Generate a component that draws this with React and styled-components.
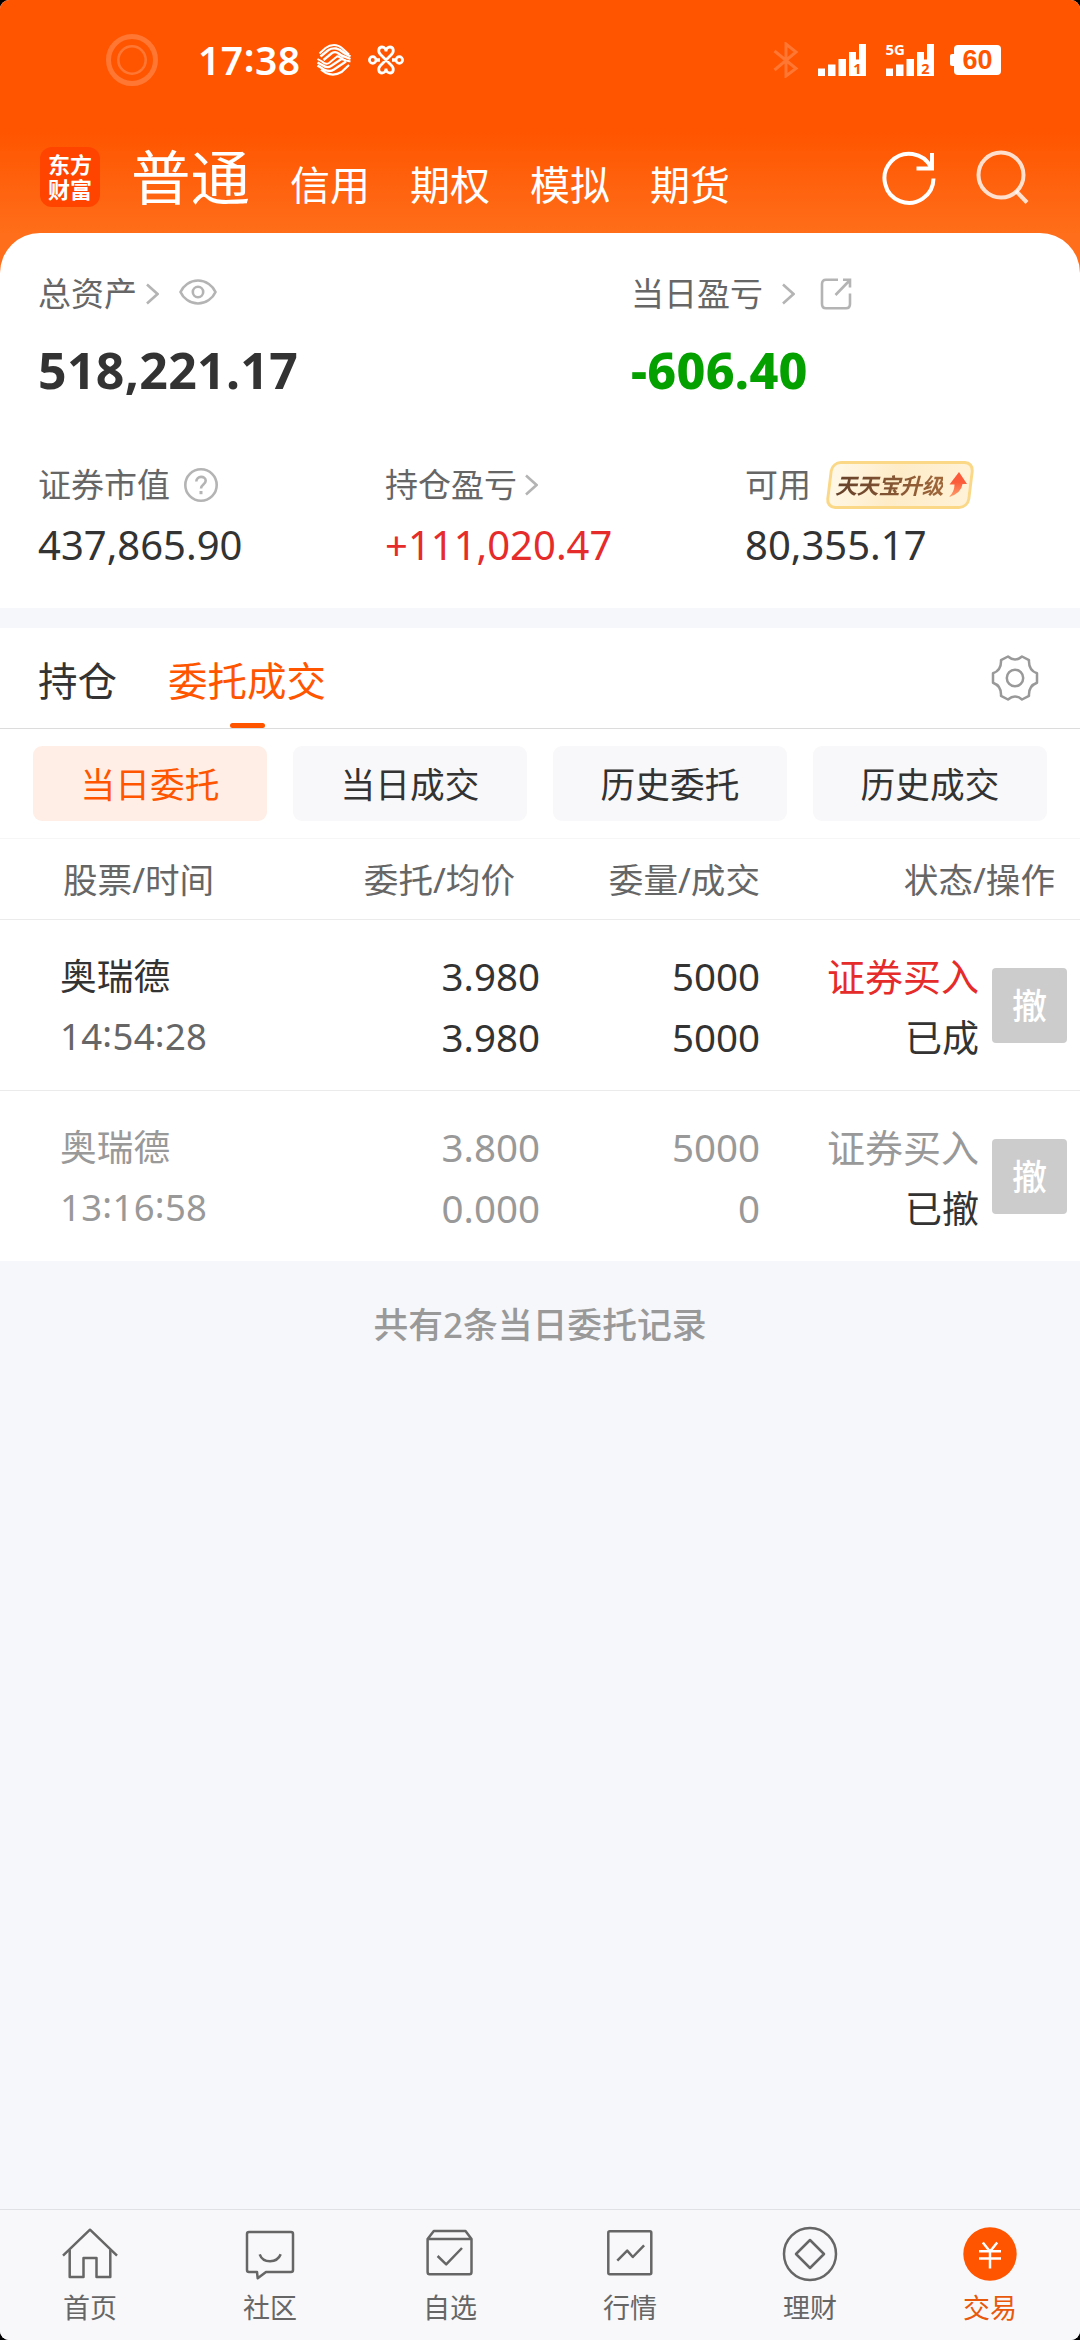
import React, { useState } from 'react';
import styled, { createGlobalStyle } from 'styled-components';

const orders = [
  { name: '奥瑞德', time: '14:54:28', price: '3.980', avg: '3.980', qty: '5000', done: '5000', side: '证券买入', status: '已成' },
  { name: '奥瑞德', time: '13:16:58', price: '3.800', avg: '0.000', qty: '5000', done: '0', side: '证券买入', status: '已撤', muted: true },
];

const accounts = ['信用', '期权', '模拟', '期货'];
const filters = ['当日委托', '当日成交', '历史委托', '历史成交'];

const navItems = [
  { label: '首页', icon: <HomeIcon /> },
  { label: '社区', icon: <CommunityIcon /> },
  { label: '自选', icon: <WatchIcon /> },
  { label: '行情', icon: <MarketIcon /> },
  { label: '理财', icon: <WealthIcon /> },
  { label: '交易', icon: <TradeIcon />, active: true },
];

function App() {
  const [filter, setFilter] = useState('当日委托');

  return (
    <Screen>
      <GlobalStyle />
      <Top>
        <StatusBar>
          <RingIcon />
          <Clock>17<Colon>:</Colon>38</Clock>
          <MobileLogo />
          <UnicomLogo />
          <StatusRight>
            <BluetoothIcon />
            <SignalIcon sim="1" />
            <SignalIcon sim="2" network="5G" />
            <Battery><span>60</span></Battery>
          </StatusRight>
        </StatusBar>
        <Header>
          <Brand>东方财富</Brand>
          <CurrentAccount>普通</CurrentAccount>
          <Accounts>
            {accounts.map((item) => (
              <a key={item}>{item}</a>
            ))}
          </Accounts>
          <RefreshIcon />
          <SearchIcon />
        </Header>
        <Assets>
          <TotalRow>
            <div>
              <Label>总资产<Chevron $left={9} /><EyeIcon /></Label>
              <Total>518,221.17</Total>
            </div>
            <div>
              <Label>当日盈亏<Chevron $left={19} /><ShareIcon /></Label>
              <Total $down>-606.40</Total>
            </div>
          </TotalRow>
          <DetailRow>
            <div>
              <DetailLabel>证券市值<HelpIcon /></DetailLabel>
              <Amount>437,865.90</Amount>
            </div>
            <div>
              <DetailLabel>持仓盈亏<Chevron $left={8} /></DetailLabel>
              <Amount $up>+111,020.47</Amount>
            </div>
            <div>
              <DetailLabel>可用<UpgradeBadge /></DetailLabel>
              <Amount>80,355.17</Amount>
            </div>
          </DetailRow>
        </Assets>
      </Top>

      <Panel>
        <Tabs>
          <Tab>持仓</Tab>
          <Tab $active>委托成交</Tab>
          <GearIcon />
        </Tabs>
        <Filters>
          {filters.map((item) => (
            <Filter key={item} $active={item === filter} onClick={() => setFilter(item)}>{item}</Filter>
          ))}
        </Filters>
        <TableHead>
          <span>股票/时间</span>
          <span>委托/均价</span>
          <span>委量/成交</span>
          <span>状态/操作</span>
        </TableHead>
        {orders.map((order) => (
          <Order key={order.time} $muted={order.muted}>
            <Stock>
              <b>{order.name}</b>
              <Time $muted={order.muted}>
                {order.time.split(':').map((part, i) => (
                  <React.Fragment key={i}>{i > 0 && <Colon>:</Colon>}{part}</React.Fragment>
                ))}
              </Time>
            </Stock>
            <Cell><span>{order.price}</span><span>{order.avg}</span></Cell>
            <Cell><span>{order.qty}</span><span>{order.done}</span></Cell>
            <Cell><Side $muted={order.muted}>{order.side}</Side><Status>{order.status}</Status></Cell>
            <CancelBtn>撤</CancelBtn>
          </Order>
        ))}
      </Panel>
      <Summary>共有2条当日委托记录</Summary>

      <BottomNav>
        {navItems.map((item) => (
          <NavItem key={item.label} $active={item.active}>
            {item.icon}
            <span>{item.label}</span>
          </NavItem>
        ))}
      </BottomNav>
    </Screen>
  );
}

export default App;

function RingIcon() {
  return (
    <svg width="52" height="52" viewBox="0 0 52 52" fill="none" stroke="#fff" strokeOpacity="0.2">
      <circle cx="26" cy="26" r="23.5" strokeWidth="5" />
      <circle cx="26" cy="26" r="13.7" strokeWidth="2.6" />
    </svg>
  );
}

function MobileLogo() {
  return (
    <CarrierSvg width="36" height="32" viewBox="0 0 36 32" $left={15}>
      <path d="M3.5 9.5L9.5 4Q13.5 1 18 1T26.5 4.5L33 10.5" strokeWidth="2" />
      <path d="M4.5 12.500L12.500 6Q15.500 4 20 4.500L24 6Q28 9.500 34.500 12.500" strokeWidth="2.400" />
      <path d="M7.500 16L16 9Q19.500 7 22.500 9.500T28 12.500L34.500 15" strokeWidth="2.400" />
      <path d="M1.500 15L6 17.500Q9.500 21 13 19L20 13.200Q22 11.500 24 13.500T30 16.500L34.500 17.500" strokeWidth="2" />
      <path d="M1.5 18.5L7 21.5Q11.500 24.500 15 22L27 14" strokeWidth="2.400" />
      <path d="M1.500 21.500L8 25.500Q14 28.500 18 25.500L30 17.500" strokeWidth="2.400" />
      <path d="M5 25.500L10 29Q18 32.500 25.500 28L33 21" strokeWidth="2.200" />
    </CarrierSvg>
  );
}

function UnicomLogo() {
  return (
    <CarrierSvg width="36" height="30" viewBox="0 0 36 30" $left={16}>
      <circle cx="4.700" cy="15" r="3.300" strokeWidth="2.700" />
      <circle cx="31.300" cy="15" r="3.300" strokeWidth="2.700" />
      <path d="M8 15H12M24 15H28" strokeWidth="3.500" />
      <path d="M12.500 20.500L23.500 9.500C26.500 6.500 25.500 2 22 2C19.500 2 18 4 18 6.500C18 4 16.500 2 14 2C10.500 2 9.500 6.500 12.500 9.500L23.500 20.500C26.500 23.500 25.500 28 22 28C19.500 28 18 26 18 23.500C18 26 16.500 28 14 28C10.500 28 9.500 23.500 12.500 20.500Z" strokeWidth="2.800" />
    </CarrierSvg>
  );
}

function BluetoothIcon() {
  return (
    <svg width="26" height="36" viewBox="0 0 26 36" fill="none" stroke="#fff" strokeOpacity="0.2" strokeWidth="3">
      <path d="M1.500 9L23 26.500L13 34V2L23 10L1.500 28" />
    </svg>
  );
}

function SignalIcon({ sim, network }) {
  return (
    <SignalSvg width="48" height="32" viewBox="0 0 48 32" fill="#fff">
      <path d="M0 24.500H7V32H0ZM10 20.500H17.500V32H10ZM20.500 15H28V32H20.500ZM31 8H38V15.500H41V0H48V32H31Z" />
      <text x="39.500" y="29.500" fontSize="14.500" fontWeight="700" textAnchor="middle" fill="#ff5500">{sim}</text>
      {network && <text x="-0.500" y="11" fontSize="15" fontWeight="700">{network}</text>}
    </SignalSvg>
  );
}

function RefreshIcon() {
  return (
    <RefreshSvg width="60" height="60" viewBox="0 0 60 60" fill="none" stroke="#fff" strokeWidth="4">
      <path d="M54.500 30.500A24.500 24.500 0 1 1 52 19.500" />
      <path d="M53 5V20.500H37.500" />
    </RefreshSvg>
  );
}

function SearchIcon() {
  return (
    <svg width="54" height="54" viewBox="0 0 54 54" fill="none" stroke="#fff" strokeOpacity="0.8" strokeWidth="4">
      <circle cx="25" cy="25" r="22.500" />
      <path d="M40 41L51 52.500" />
    </svg>
  );
}

function Chevron({ $left }) {
  return (
    <ChevronSvg $left={$left} width="13" height="22" viewBox="0 0 13 22" fill="none" stroke="#b4b4b4" strokeWidth="2.600">
      <path d="M1 1.500L11.500 11L1 20.500" />
    </ChevronSvg>
  );
}

function EyeIcon() {
  return (
    <EyeSvg $left={20} width="38" height="28" viewBox="0 0 38 28">
      <path d="M1.500 14C4 8 11 2.500 19 2.500S34 8 36.500 14C34 20 27 25.500 19 25.500S4 20 1.500 14Z" />
      <circle cx="19" cy="14" r="5.200" />
    </EyeSvg>
  );
}

function ShareIcon() {
  return (
    <IconSvg $left={25} width="32" height="32" viewBox="0 0 32 32">
      <path d="M18 1.700H6Q2 1.700 2 6V26Q2 30.300 6 30.300H26Q30 30.300 30 26V15.500" />
      <path d="M15.500 17L29.500 2.500M23 1.700H30V9.500" />
    </IconSvg>
  );
}

function HelpIcon() {
  return (
    <IconSvg $left={14} width="34" height="34" viewBox="0 0 34 34">
      <circle cx="17" cy="17" r="15.700" />
      <path d="M12.300 13.500C12.300 7.500 21.700 7.500 21.700 12.700C21.700 16.500 17 16.500 17 20.500" />
      <path d="M17 23V26.200" strokeWidth="3" />
    </IconSvg>
  );
}

function UpgradeBadge() {
  return (
    <Badge>
      <BadgeText>天天宝升级</BadgeText>
      <svg width="20" height="26" viewBox="0 0 20 26">
        <defs>
          <linearGradient id="rise" x1="0" y1="0" x2="0" y2="1">
            <stop offset="0.400" stopColor="#fb5b3a" />
            <stop offset="1" stopColor="#ff9d6c" />
          </linearGradient>
        </defs>
        <path d="M11 0L19 12H14.500Q13.500 21 1 25Q6.500 20 6.500 12.500H1.500Z" fill="url(#rise)" />
      </svg>
    </Badge>
  );
}

function GearIcon() {
  return (
    <GearSvg width="48" height="48" viewBox="-24 -24 48 48" fill="none" stroke="#999" strokeWidth="2.500" strokeLinejoin="round">
      <path d="M-7 -21.500Q0 -15.500 7 -21.500L14 -17.800C13.500 -9.500 17 -6.500 22 -4.700V4.700C17 6.500 13.500 9.500 14 17.800L7 21.500Q0 15.500 -7 21.500L-14 17.800C-13.500 9.500 -17 6.500 -22 4.700V-4.700C-17 -6.500 -13.500 -9.500 -14 -17.800Z" />
      <circle r="8.200" />
    </GearSvg>
  );
}

function HomeIcon() {
  return (
    <NavSvg viewBox="0 0 64 64">
      <path d="M5 33.700L32 7.700L59 33.700" />
      <path d="M11.700 28V55H25.500V36H38.500V55H52.300V28" />
    </NavSvg>
  );
}

function CommunityIcon() {
  return (
    <NavSvg viewBox="0 0 64 64">
      <path d="M11 10H53Q55 10 55 12V48Q55 50 53 50H28L19.700 56.300L19 50H11Q9 50 9 48V12Q9 10 11 10Z" />
      <path d="M21.700 32.300C25 41.500 39 41.500 42.700 32.300" />
    </NavSvg>
  );
}

function WatchIcon() {
  return (
    <NavSvg viewBox="0 0 64 64">
      <path d="M9.600 17H53.500V50Q53.500 52.300 51.500 52.300H11.600Q9.600 52.300 9.600 50ZL15.800 9H47.500L53.500 17" />
      <path d="M19.600 34L28.200 42.300L44 26" />
    </NavSvg>
  );
}

function MarketIcon() {
  return (
    <NavSvg viewBox="0 0 64 64">
      <rect x="10.300" y="9.300" width="43" height="43" rx="1.500" />
      <path d="M19.300 38.700L29.200 28.700L34.800 35L46.100 23.300" />
    </NavSvg>
  );
}

function WealthIcon() {
  return (
    <NavSvg viewBox="0 0 64 64">
      <circle cx="32" cy="32" r="26" />
      <path d="M32 18L46 32L32 46L18 32Z" />
    </NavSvg>
  );
}

function TradeIcon() {
  return (
    <NavSvg viewBox="0 0 64 64">
      <circle cx="32" cy="32" r="26.700" fill="#ff5500" stroke="none" />
      <path d="M24.800 20.500L32 29.500L39.200 20.500M21 29.300H43M21 36.600H43M32 29.500V46.500" stroke="#fff" />
    </NavSvg>
  );
}

const GlobalStyle = createGlobalStyle`
  body {
    margin: 0;
    background: #000;
    font-family: 'Noto Sans', 'Noto Sans CJK SC', sans-serif;
    color: #333;
  }
  * {
    box-sizing: border-box;
  }
  svg {
    display: block;
    flex-shrink: 0;
  }
`

const Screen = styled.div`
  width: 1080px;
  height: 2340px;
  display: flex;
  flex-direction: column;
  overflow: hidden;
  border-radius: 9px;
  background: #f6f7fa;
`

const Top = styled.div`
  background: linear-gradient(#ff5500 132px, #ff6e1a 234px, #ff6e1a);
`

const StatusBar = styled.div`
  height: 120px;
  padding: 0 79px 0 106px;
  display: flex;
  align-items: center;
`

const Clock = styled.div`
  width: 103px;
  margin-left: 40px;
  color: #fff;
  font-size: 39px;
  font-weight: 600;
  line-height: 50px;
  letter-spacing: 0.500px;
  white-space: nowrap;
`

const Colon = styled.span`
  position: relative;
  top: -0.080em;
`

const CarrierSvg = styled.svg`
  margin-left: ${props => props.$left}px;
  fill: none;
  stroke: #fff;
`

const StatusRight = styled.div`
  margin-left: auto;
  display: flex;
  align-items: center;

  > * + * {
    margin-left: 19px;
  }
`

const SignalSvg = styled.svg`
  margin-right: 1px;
  overflow: visible;
`

const Battery = styled.div`
  position: relative;
  width: 47px;
  height: 30px;
  border-radius: 4px;
  background: #fff;
  color: #ff5500;
  font-family: 'Liberation Sans', sans-serif;
  font-size: 27px;
  font-weight: 700;
  line-height: 31px;
  text-align: center;

  &::before {
    content: '';
    position: absolute;
    left: -4px;
    top: 9px;
    width: 5px;
    height: 12px;
    border-radius: 2px 0 0 2px;
    background: #fff;
  }
`

const Header = styled.div`
  height: 113px;
  padding: 0 50px 0 40px;
  display: flex;
  align-items: center;
  color: #fff;
`

const Brand = styled.div`
  width: 60px;
  height: 60px;
  padding: 5px 7px 0 8px;
  border-radius: 12px;
  background: #ff4400;
  font-size: 22px;
  font-weight: 700;
  line-height: 25px;
`

const CurrentAccount = styled.div`
  margin-left: 31px;
  font-size: 59.500px;
  line-height: 113px;
`

const Accounts = styled.div`
  display: flex;
  gap: 40px;
  margin-left: 40px;
  padding-top: 17px;

  a {
    font-size: 40px;
    line-height: 60px;
  }
`

const RefreshSvg = styled.svg`
  margin: 3px 37px 0 auto;
`

const Assets = styled.div`
  padding: 41px 0 38px 38px;
  border-radius: 40px 40px 0 0;
  background: #fff;
`

const TotalRow = styled.div`
  display: grid;
  grid-template-columns: 593px 1fr;
`

const DetailRow = styled.div`
  display: grid;
  grid-template-columns: 347px 360px 1fr;
  margin-top: 61px;
`

const Label = styled.div`
  height: 40px;
  display: flex;
  align-items: center;
  color: #666;
  font-size: 33px;
  line-height: 40px;
`

const DetailLabel = styled(Label)`
  height: 48px;
`

const Total = styled.div`
  margin-top: 26px;
  font-size: 50px;
  font-weight: ${props => props.$down ? 800 : 700};
  line-height: 60px;
  letter-spacing: 0.300px;
  color: ${props => props.$down ? '#04a000' : '#333'};
`

const Amount = styled.div`
  margin-top: 11px;
  font-size: 40px;
  line-height: 50px;
  color: ${props => props.$up ? '#e62b2b' : '#333'};
`

const ChevronSvg = styled.svg`
  margin-left: ${props => props.$left}px;
`

const IconSvg = styled.svg`
  margin-left: ${props => props.$left}px;
  fill: none;
  stroke: #b4b4b4;
  stroke-width: 2.600;
`

const EyeSvg = styled(IconSvg)`
  margin-bottom: 4px;
`

const Badge = styled.div`
  position: relative;
  z-index: 0;
  width: 150px;
  height: 48px;
  margin-left: 14px;
  padding-left: 10px;
  display: flex;
  align-items: center;
  gap: 5px;

  &::before {
    content: '';
    position: absolute;
    z-index: -1;
    inset: 0 3px;
    border: 3px solid #fad888;
    border-radius: 10px;
    background: linear-gradient(100deg, #fff8e8, #feecc8 45%, #fff2d8);
    transform: skewX(-7deg);
  }
`

const BadgeText = styled.span`
  background: linear-gradient(90deg, #64402a, #a0673a);
  background-clip: text;
  color: transparent;
  font-size: 22px;
  font-style: italic;
  font-weight: 700;
  letter-spacing: -0.400px;
  white-space: nowrap;
`

const Panel = styled.div`
  margin-top: 20px;
  background: #fff;
`

const Tabs = styled.div`
  height: 101px;
  padding: 0 41px 0 38px;
  display: flex;
  align-items: center;
  gap: 51px;
  border-bottom: 1px solid #dcdcdc;
`

const Tab = styled.div`
  position: relative;
  height: 100px;
  padding-top: 5px;
  font-size: 39.500px;
  line-height: 96px;
  color: ${props => props.$active ? '#ff5500' : '#333'};

  &::after {
    content: '';
    display: ${props => props.$active ? 'block' : 'none'};
    position: absolute;
    left: 62px;
    bottom: 0;
    width: 35px;
    height: 5px;
    border-radius: 3px;
    background: #ff5500;
  }
`

const GearSvg = styled.svg`
  margin-left: auto;
`

const Filters = styled.div`
  height: 110px;
  padding: 0 33px;
  display: grid;
  grid-template-columns: repeat(4, 1fr);
  gap: 26px;
  align-items: center;
  border-bottom: 1px solid #f6f6f6;
`

const Filter = styled.div`
  height: 75px;
  border-radius: 9px;
  font-size: 34.700px;
  line-height: 77px;
  text-align: center;
  cursor: pointer;
  color: ${props => props.$active ? '#ff5500' : '#333'};
  background: ${props => props.$active ? '#ffeee6' : '#f8f8fa'};
`

const TableHead = styled.div`
  height: 81px;
  padding-left: 63px;
  display: grid;
  grid-template-columns: 199px 253px 245px 295px;
  border-bottom: 1px solid #ebebeb;
  color: #666;
  font-size: 34.600px;
  line-height: 82px;
  text-align: right;
  white-space: nowrap;

  span:first-child {
    text-align: left;
  }
`

const Order = styled.div`
  height: 170px;
  padding-left: 60px;
  display: grid;
  grid-template-columns: 240px 240px 220px 219px 88px;
  align-items: center;
  color: ${props => props.$muted ? '#999' : '#333'};

  & + & {
    height: 171px;
    border-top: 1px solid #ebebeb;
  }
`

const Stock = styled.div`
  display: flex;
  flex-direction: column;
  padding-top: 2px;
  line-height: 60px;

  b {
    font-size: 36.700px;
    font-weight: 400;
  }
`

const Time = styled.span`
  font-size: 36.500px;
  letter-spacing: 0.300px;
  color: ${props => props.$muted ? '#999' : '#666'};
`

const Cell = styled.div`
  display: flex;
  flex-direction: column;
  padding-top: 4px;
  font-size: 38.500px;
  line-height: 61px;
  text-align: right;
`

const Side = styled.span`
  font-size: 38px;
  color: ${props => props.$muted ? '#999' : '#e62b2b'};
`

const Status = styled.span`
  font-size: 37px;
  color: #333;
`

const CancelBtn = styled.div`
  width: 75px;
  height: 75px;
  margin-left: 13px;
  border-radius: 4px;
  background: #ccc;
  color: #fff;
  font-size: 35px;
  font-weight: 500;
  line-height: 76px;
  text-align: center;
`

const Summary = styled.div`
  margin-top: 39px;
  color: #999;
  font-size: 34.800px;
  font-weight: 500;
  line-height: 50px;
  text-align: center;
`

const BottomNav = styled.div`
  height: 131px;
  margin-top: auto;
  display: grid;
  grid-template-columns: repeat(6, 1fr);
  border-top: 1px solid #dfe1e4;
  background: #f8f8fa;
`

const NavItem = styled.div`
  padding-top: 12px;
  display: flex;
  flex-direction: column;
  align-items: center;
  gap: 4px;
  font-size: 27px;
  line-height: 36px;
  color: ${props => props.$active ? '#e8590c' : '#666'};
`

const NavSvg = styled.svg`
  width: 64px;
  height: 64px;
  fill: none;
  stroke: #666;
  stroke-width: 2.500;
  stroke-linejoin: round;
`
